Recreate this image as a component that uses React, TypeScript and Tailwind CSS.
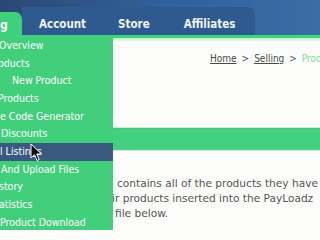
const menuItems = [
  { label: 'Overview', cls: 'ml-[-1px]' },
  { label: 'oducts', cls: 'ml-[-2px]' },
  { label: 'New Product', cls: 'ml-[12px]' },
  { label: 'Products', cls: 'ml-[-2px]' },
  { label: 'e Code Generator', cls: 'ml-0' },
  { label: 'Discounts', cls: 'ml-[1px]' },
  { label: 'l Listings', cls: 'ml-0', active: true },
  { label: 'And Upload Files', cls: 'ml-[1px]' },
  { label: 'story', cls: 'ml-[-1px]' },
  { label: 'atistics', cls: 'ml-[-1px]' },
  { label: 'Product Download', cls: 'ml-0' },
];

function Cursor() {
  return (
    <svg className="absolute left-[30px] top-[143px]" width="13" height="19" viewBox="0 0 13 19">
      <path
        d="M1 1 L1 15 L4.5 11.8 L7 17.5 L9.2 16.5 L6.8 11 L11.5 11 Z"
        fill="#111"
        stroke="#fff"
        strokeWidth="1"
        strokeLinejoin="round"
      />
    </svg>
  );
}

export default function App() {
  return (
    <div
      className="relative w-[320px] h-[240px] overflow-hidden bg-[#fcfdfa]"
      style={{ fontFamily: '"DejaVu Sans Condensed", "DejaVu Sans", Verdana, sans-serif' }}
    >
      {/* Top nav */}
      <div className="h-[35px] flex items-end bg-gradient-to-r from-[#2a4876] via-[#31609a] to-[#3a6ea5]">
        <div className="w-[22px] h-[23px] bg-[#3fd07c] rounded-tr-[7px] flex items-center pt-[3px] text-white font-bold text-[12px]">
          g
        </div>
        <div className="w-[233px] h-[28px] bg-[#2e5a8f] rounded-tr-[8px] flex items-center pt-[7px] font-bold text-[11.5px] text-[#eef4fb]">
          <span className="ml-[17px]">Account</span>
          <span className="ml-[32px]">Store</span>
          <span className="ml-[34px]">Affiliates</span>
        </div>
      </div>
      <div className="h-[3px] bg-[#3fd37b]" />
      <div className="h-[4px] bg-gradient-to-b from-[#b9eecb] to-[#fcfdfa]" />

      {/* Content */}
      <div className="h-[33px] pl-[210px] pt-[9px] text-[10px] text-[#555] whitespace-nowrap flex gap-[5px]">
        <span className="underline text-[#4a4a4a]">Home</span>
        <span>&gt;</span>
        <span className="underline text-[#4a4a4a]">Selling</span>
        <span>&gt;</span>
        <span className="text-[#7dd8a0]">Products</span>
      </div>

      <div className="mt-[53px] h-[22px] bg-[#43d17f] border-t border-b border-t-[#5cb98a] border-b-[#6cbf94] shadow-[0_-1px_0_#c4efd4,0_1px_0_#c4efd4]" />

      <div
        className="pt-[26px] text-[10.6px] leading-[15px] text-[#555] whitespace-nowrap"
        style={{ fontFamily: '"DejaVu Sans", Verdana, sans-serif' }}
      >
        <div className="pl-[117px]">contains all of the products they have</div>
        <div className="pl-[112px]">ir products inserted into the PayLoadz</div>
        <div className="pl-[115px]">file below.</div>
      </div>

      {/* Dropdown menu */}
      <div className="absolute left-0 top-[37px] w-[113px] h-[193px] bg-[#41cf7c] overflow-hidden">
        {menuItems.map((item) => (
          <div
            key={item.label}
            className={`h-[17.7px] flex items-center whitespace-nowrap text-white text-[10.5px] ${item.active ? 'bg-[#385a80]' : ''}`}
          >
            <span className={item.cls}>{item.label}</span>
          </div>
        ))}
      </div>

      <Cursor />
    </div>
  );
}
